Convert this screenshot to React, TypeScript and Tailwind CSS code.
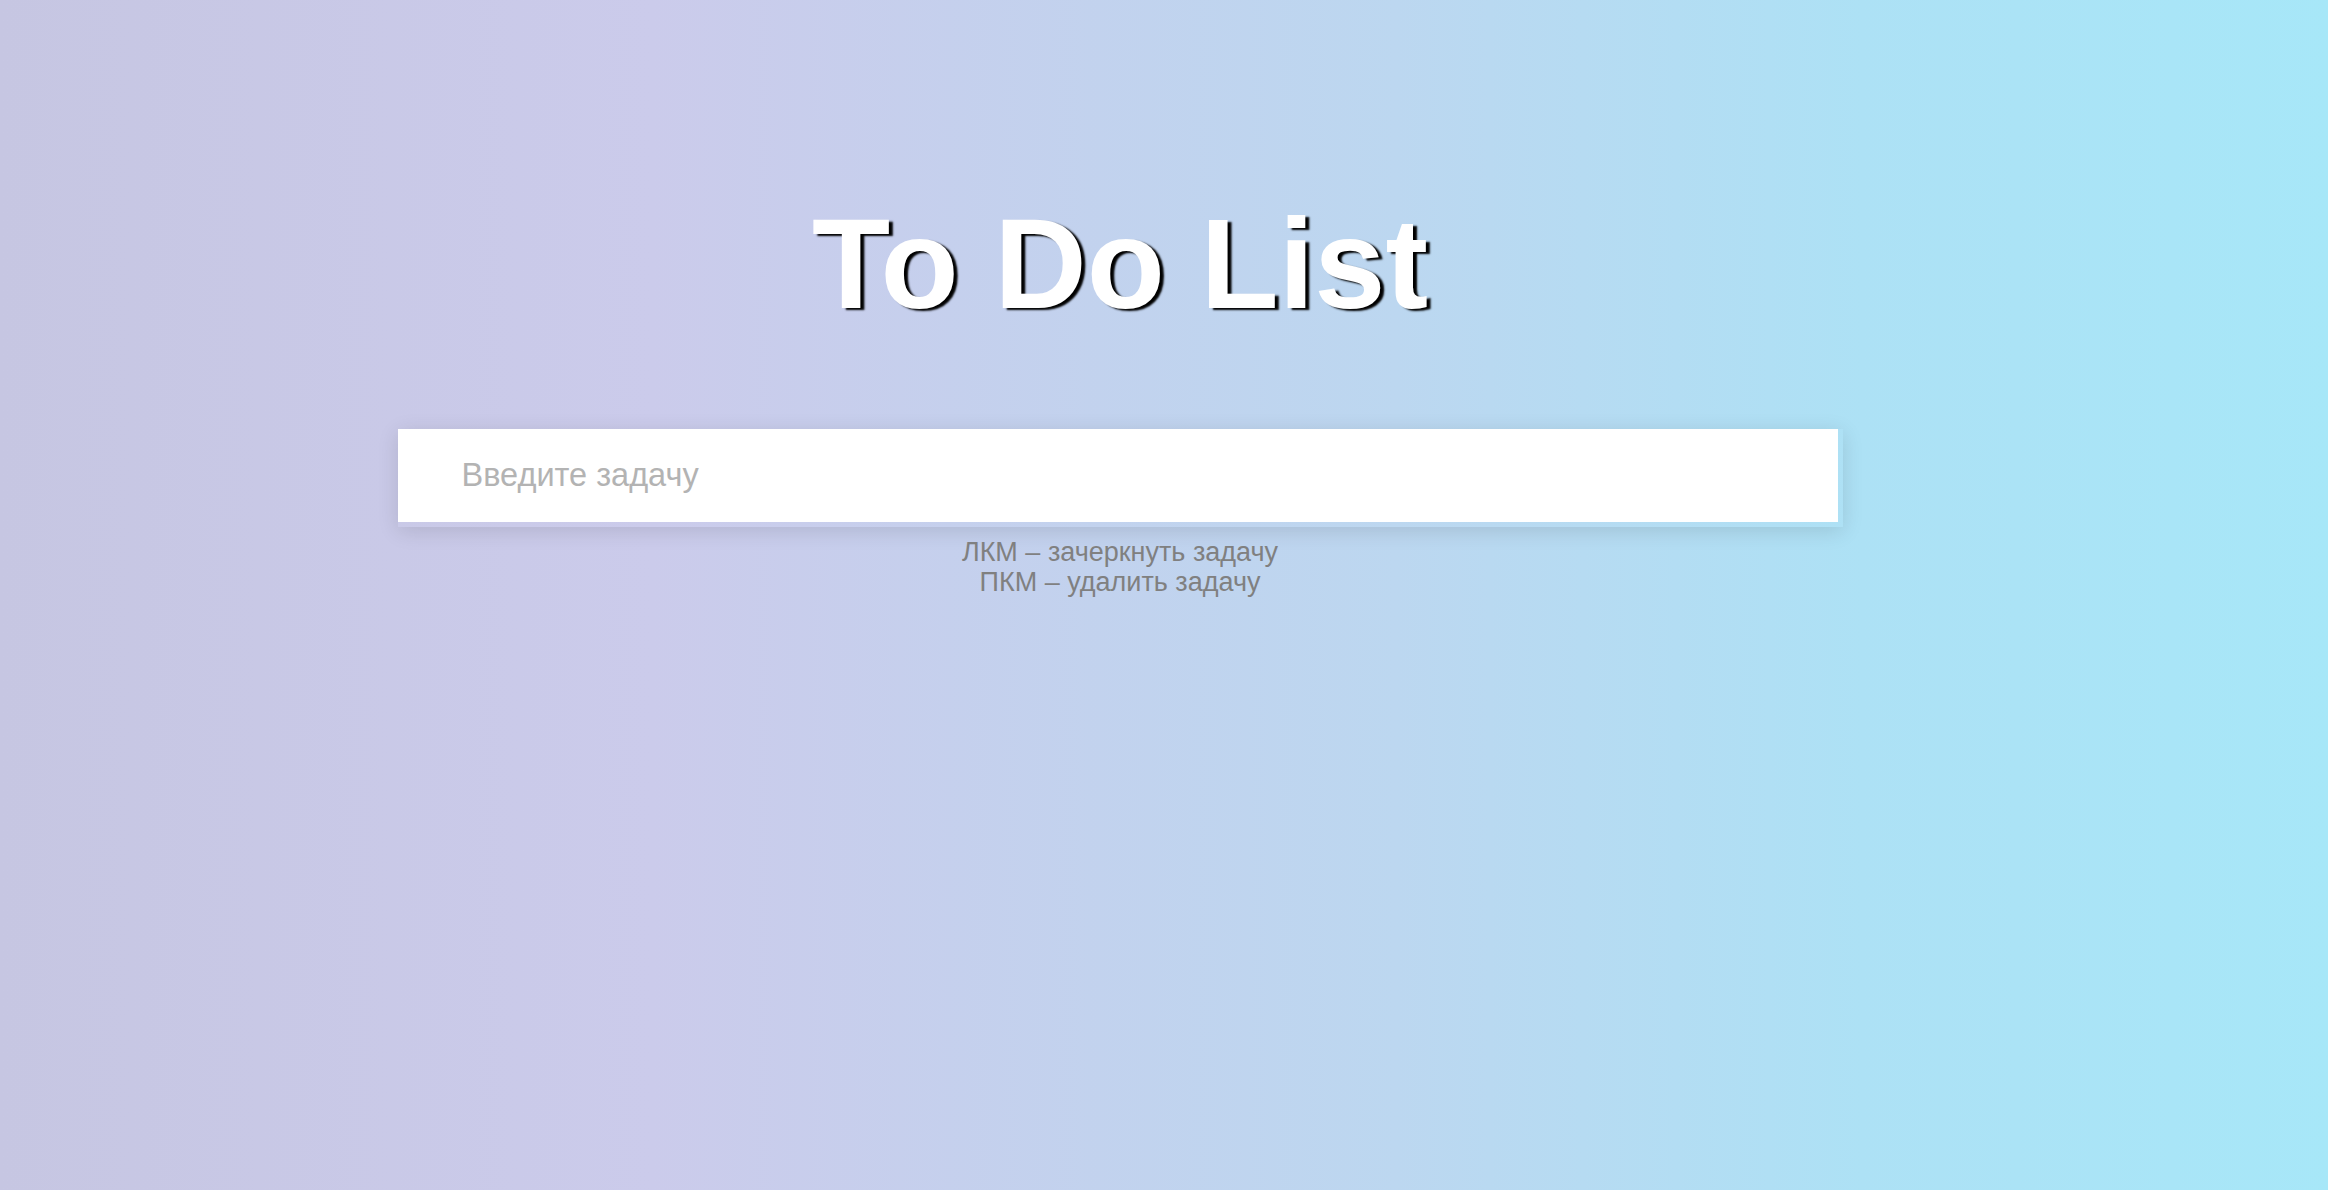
import React from "react";

export default function App() {
  return (
    <div className="min-h-screen w-full bg-[linear-gradient(to_right,#c6c6e2_0%,#cbcbeb_28%,#bcd7f0_60%,#ade1f5_80%,#a7e7f8_100%)] font-['Liberation_Sans',Arial,sans-serif]">
      <div className="flex flex-col items-center pt-[190px] pr-[88px]">
        <h1 className="text-[128px] font-bold leading-[147px] text-white [text-shadow:4px_2px_2px_#000]">
          To Do List
        </h1>
        <div className="mt-[92px] pr-[5px] pb-[5px] shadow-[0_4px_20px_rgba(0,0,0,0.12)]">
          <input
            type="text"
            placeholder="Введите задачу"
            className="block h-[93px] w-[1440px] bg-white pl-[64px] text-[32.5px] text-[#333] outline-none placeholder:text-[#b3b3b3] font-['Liberation_Sans',Arial,sans-serif]"
          />
        </div>
        <p className="mt-[11px] text-center text-[27px] leading-[29.5px] text-[#808080]">
          ЛКМ – зачеркнуть задачу
          <br />
          ПКМ – удалить задачу
        </p>
      </div>
    </div>
  );
}
